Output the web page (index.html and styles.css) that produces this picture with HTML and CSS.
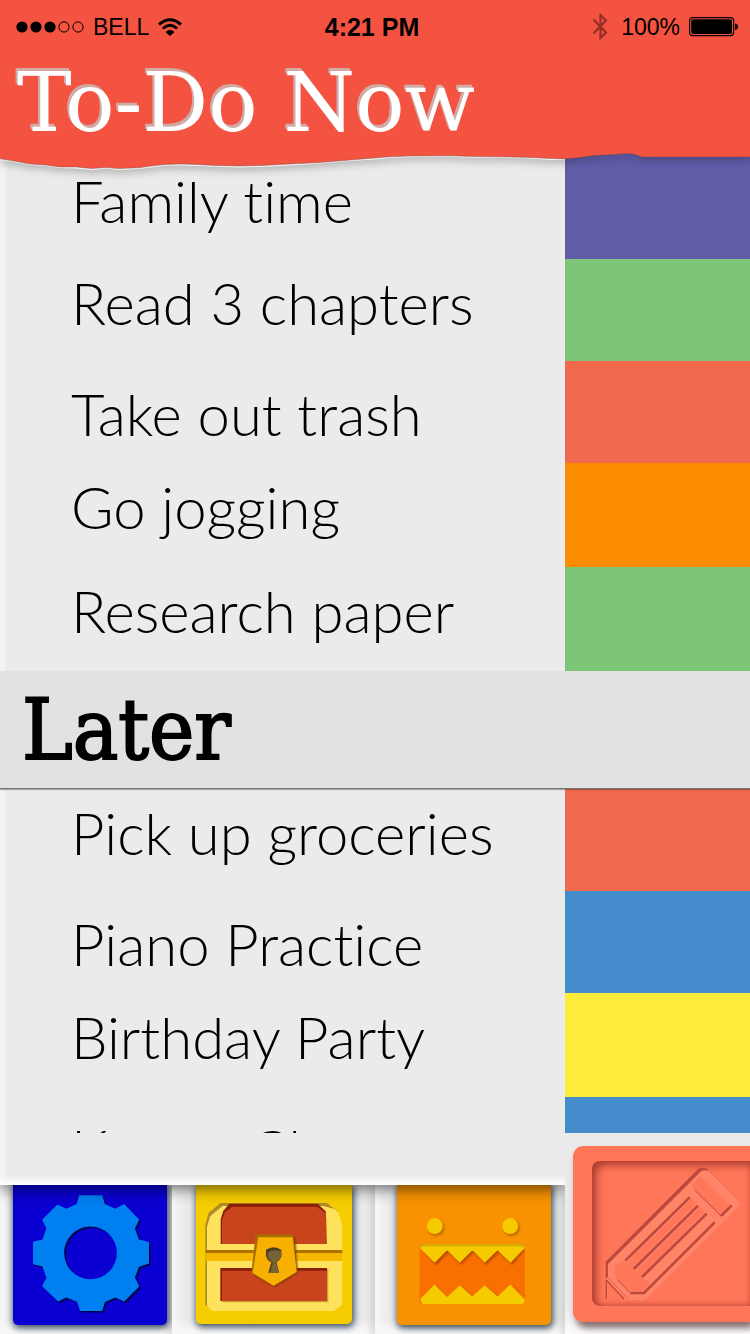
FILE: index.html
```html
<!DOCTYPE html>
<html lang="en">
<head>
<meta charset="utf-8">
<meta name="viewport" content="width=device-width, initial-scale=1">
<title>To-Do Now</title>
<link rel="stylesheet" href="styles.css">
</head>
<body>
<header class="header">
  <div class="status">
    <div class="status-side">
      <svg class="dots" width="68" height="14" viewBox="0 0 68 14" aria-hidden="true"><circle cx="6" cy="7" r="5.6"/><circle cx="20" cy="7" r="5.6"/><circle cx="34" cy="7" r="5.6"/><g fill="none" stroke="#000"><circle cx="48" cy="7" r="5.1"/><circle cx="62" cy="7" r="5.1"/></g></svg>
      <span>BELL</span>
      <svg width="24" height="18" viewBox="0 0 24 18" aria-hidden="true"><g fill="none" stroke="#000" stroke-width="3"><path d="M1 6.500Q12-3 23 6.500"/><path d="M4.800 10.500Q12 4 19.200 10.500"/></g><path d="M7.500 14Q12 9.800 16.500 14L12 18Z"/></svg>
    </div>
    <strong class="time">4:21 PM</strong>
    <div class="status-side status-right">
      <svg width="16" height="28" viewBox="0 0 16 28" aria-hidden="true"><path d="M1.500 6.500L14 19.500L8.500 25V2L14 7.500L1.500 20.500" fill="none" stroke="#962f26" stroke-width="2.200"/></svg>
      <span>100%</span>
      <svg width="50" height="20" viewBox="0 0 50 20" aria-hidden="true"><rect x=".6" y=".6" width="44" height="18" rx="3" fill="none" stroke="#000" stroke-width="1.200"/><rect x="2.200" y="2.200" width="40.800" height="14.800" rx="2"/><path d="M46 6.500Q49 7 49 9.700T46 13Z"/></svg>
    </div>
  </div>
  <h1 class="title">To-Do Now</h1>
  <svg class="tear" viewBox="0 0 750 22" preserveAspectRatio="none" aria-hidden="true">
    <path fill="#f4f4f4" d="M0 0V10L14 12L30 15L45 16L60 18L76 18.500L91 20L107 18.800L118 20L139 19L151 17.500L165 15.800L180 15.500L196 16L215 16.800L239 17.500L262 17L290 15.500L320 13.500L350 11L375 9.500L390 8L409 7L450 6.800L475 7.800L500 7.800L530 8.500L550 10L565 10V0Z"/>
    <path fill="#f45341" stroke="#5c4740" stroke-opacity=".55" stroke-width=".7" d="M-2-2V8.500L14 11L30 14L45 15L60 17L76 17L91 18.500L107 17.600L118 18.600L139 17.800L151 16L165 14.500L180 14L196 14.500L215 15.500L239 16L262 15.500L290 14L320 12.500L350 10L375 8L390 6.800L409 6L450 5.800L475 6.600L500 6.800L530 7.400L550 8.500L565 9L580 7.500L595 5.500L615 4.500L628 3.500L635 4.500L642 7H752V-2Z"/>
  </svg>
</header>
<main>
  <ul class="list">
    <li class="item first"><span class="label">Family time</span><span class="swatch purple"></span></li>
    <li class="item"><span class="label">Read 3 chapters</span><span class="swatch green"></span></li>
    <li class="item low"><span class="label">Take out trash</span><span class="swatch coral"></span></li>
    <li class="item tall"><span class="label">Go jogging</span><span class="swatch orange"></span></li>
    <li class="item tall"><span class="label">Research paper</span><span class="swatch green"></span></li>
  </ul>
  <h2 class="later">Later</h2>
  <ul class="list">
    <li class="item"><span class="label">Pick up groceries</span><span class="swatch coral"></span></li>
    <li class="item low"><span class="label">Piano Practice</span><span class="swatch blue"></span></li>
    <li class="item tall"><span class="label">Birthday Party</span><span class="swatch yellow"></span></li>
    <li class="item low cut"><span class="label">Karate Class</span><span class="swatch blue"></span></li>
  </ul>
</main>
<footer class="footer">
  <div class="dock">
    <div class="paper"></div>
    <nav class="tabs" aria-label="Sections">
      <div class="tab tab-gear"><button class="card card-blue" type="button" aria-label="Settings">
        <svg viewBox="39 257 461 419" aria-hidden="true"><defs><path id="gear" fill-rule="evenodd" d="M237 288H306L314 314L345 328L372 314L417 361L404 387L416 420L446 428V492L416 502L404 534L417 561L372 606L345 594L314 607L306 634H240L231 607L199 594L174 606L126 560L139 535L127 501L99 494V427L127 420L139 387L126 361L172 315L199 328L230 314ZM271 381A79 79 0 1 0 271 539A79 79 0 1 0 271 381Z"/></defs><use href="#gear" fill="#03064f" x="5" y="5"/><use href="#gear" fill="#0080f0"/></svg>
      </button></div>
      <div class="tab tab-chest"><button class="card card-yellow" type="button" aria-label="Rewards">
        <svg viewBox="48 45 468 417" aria-hidden="true">
          <path fill="#b18b29" d="M76 405V165L86 128L122 99H440L472 123L460 125L430 112L130 112L92 140L84 180V410Z"/>
          <path fill="#ffe25b" d="M81 400V170L91 138L128 108H430L462 116L474 126L487 166V403L462 423H98L81 408Z"/>
          <path fill="#8b1f0d" d="M122 222V148L130 122L148 101H413L437 124L440 222Z"/>
          <path fill="#c8441c" d="M126 222V150L135 127L157 110H411L433 127L439 148V222Z"/>
          <path fill="#ad7300" d="M77 240H487V249H77Z"/><path fill="#f5b800" d="M77 249H487V273H77Z"/>
          <path fill="#c8a52e" d="M126 298H445V397H126Z"/><path fill="#8b1f0d" d="M121 294H441V393H121Z"/><path fill="#c8441c" d="M126 302H441V393H126Z"/>
          <path class="soft" fill="#7a3b08" d="M232 200L345 202L353 308L285 351L222 314Z"/>
          <path fill="#a96c00" d="M227 193H338L340 202L350 306L281 347L214 309Z"/>
          <path fill="#f8b000" d="M235 202H338L350 306L281 347L218 309Z"/>
          <path fill="#4d4022" d="M258 239Q280 224 304 239V260Q299 271 290 277L297 308H265L274 277Q260 270 258 257Z"/>
          <path fill="#756334" d="M263 248Q281 236 304 244V260Q299 271 288 277L297 308H270L279 277Q263 269 263 254Z"/>
        </svg>
      </button></div>
      <div class="tab tab-monster"><button class="card card-orange" type="button" aria-label="Monster">
        <svg viewBox="82 45 461 420" aria-hidden="true">
          <g class="soft" fill="#b76600"><circle cx="199" cy="173" r="24"/><circle cx="425" cy="173" r="24"/></g>
          <g fill="#f5cb00"><circle cx="195" cy="168" r="24"/><circle cx="421" cy="168" r="24"/></g>
          <rect x="149" y="221" width="316" height="181" rx="12" fill="#f87000"/>
          <path class="soft" fill="#b84900" d="M157 236L199 285L237 246L273 284L312 246L350 284L388 246L427 284L461 244V230H157ZM156 392L197 349L235 385L273 349L311 385L350 349L388 385L427 349L461 387V392Z"/>
          <path fill="#d6ad00" d="M150 232Q152 221 164 221H454Q465 222 465 234L455 242H159Z"/>
          <path fill="#f5cb00" d="M150 233L160 229H455L465 233L422 278L383 240L345 278L308 240L270 278L232 240L195 278ZM152 386L194 343L232 380L270 345L307 379L345 345L383 379L421 343L465 388Q464 402 453 402H163Q153 399 152 386Z"/>
        </svg>
      </button></div>
    </nav>
  </div>
  <div class="compose">
    <button class="compose-btn" type="button" aria-label="New task"><span class="recess">
      <svg viewBox="112 123 474 434" aria-hidden="true">
        <path fill="#ff8468" d="M160 429L435 153Q448 143 462 153L550 237Q560 250 549 263L284 529Q274 540 260 540H154V474L160 468Z"/>
        <path fill="#bd493d" d="M153 425L430 147Q446 136 462 150L456 152Q445 148 437 156L160 432V470L153 476Z"/>
        <path fill="none" stroke="#d75f4d" stroke-width="2" d="M462 150L554 243"/>
        <path fill="#ff7658" d="M437 169L526 257L500 285L416 207L413 194ZM180 435L209 422L284 491L264 513H227L187 478L180 462Z"/>
        <path fill="#ff7658" d="M218 426L410 236L425 250L233 442ZM244 451L435 261L451 276L260 467Z"/>
        <g fill="none" stroke="#bd493d" stroke-width="8"><path d="M212 422L405 232M237 447L430 257M262 471L456 281M480 307L268 519H227M499 288L531 256"/></g>
        <path fill="none" stroke="#bd493d" stroke-width="3" d="M420 210L499 288M187 478L227 519"/>
        <path fill="#ff7658" d="M159 486L210 540H157Z"/>
        <path fill="none" stroke="#bd493d" stroke-width="4" d="M155 480V538M155 480L208 537"/>
        <path fill="none" stroke="#c95040" stroke-width="2" d="M160 472L221 538"/>
      </svg>
    </span></button>
  </div>
</footer>
</body>
</html>
```
FILE: styles.css
```css
* { box-sizing: border-box; }

body {
  margin: 0;
  min-height: 100vh;
  display: flex;
  flex-direction: column;
  overflow-x: hidden;
  background: #ebebeb;
  color: #000;
  font-family: "Liberation Sans", Arial, sans-serif;
}

h1, h2, ul { margin: 0; padding: 0; }
ul { list-style: none; }
svg { display: block; }
button { border: 0; padding: 0; cursor: pointer; }

.header {
  position: relative;
  z-index: 2;
  height: 150px;
  background: #f45341;
}

.status {
  display: grid;
  grid-template-columns: 308fr auto 319fr;
  align-items: center;
  height: 54px;
  padding: 0 11px 0 16px;
  font-size: 23px;
}

.status-side {
  display: flex;
  align-items: center;
  gap: 9px;
}

.status-right { justify-content: flex-end; }
.status-right svg:first-child { margin-right: 4px; }
.time { font-size: 25px; }

.title, .later {
  font-weight: 400;
  white-space: nowrap;
}

.title {
  padding-left: 17px;
  font-family: "DejaVu Serif", serif;
  font-size: 82px;
  line-height: 98px;
  color: #fff;
  text-shadow: -1px -1px #d1aaa6, -2px -2px #d1aaa6, -2px -3px #d1aaa6;
}

.tear {
  position: absolute;
  left: 0;
  top: 100%;
  width: 100%;
  height: 22px;
  filter: drop-shadow(0 3px 4px rgba(0, 0, 0, .25));
  clip-path: inset(0 0 -14px 0);
}

.item {
  display: grid;
  grid-template-columns: 565fr 185fr;
  height: 102px;
}

.label {
  padding: 12px 0 0 71px;
  background: linear-gradient(90deg, #f4f4f4 3px, #ebebeb 8px);
  font-family: Lato, sans-serif;
  font-size: 58px;
  font-weight: 300;
  font-variant-ligatures: none;
  line-height: 64px;
  white-space: nowrap;
}

.first { height: 109px; }
.first .label { padding-top: 19px; }
.tall { height: 104px; }
.low .label { padding-top: 21px; }
.cut { height: 36px; overflow: hidden; }

.purple { background: #605ca8; }
.green { background: #7dc577; }
.coral { background: #f26a4e; }
.orange { background: #fb8c00; }
.blue { background: #448ccb; }
.yellow { background: #ffeb3b; }

.later {
  position: relative;
  height: 118px;
  padding-left: 22px;
  border-bottom: 1px solid #777;
  background: #e2e2e2;
  box-shadow: 0 1px 1px rgba(0, 0, 0, .3);
  font-family: "DejaVu Serif Condensed", "DejaVu Serif", serif;
  font-stretch: condensed;
  font-size: 85px;
  line-height: 118px;
  -webkit-text-stroke: 2px #000;
}

.footer {
  flex: 1;
  display: grid;
  grid-template-columns: 565fr 185fr;
}

.dock {
  display: flex;
  flex-direction: column;
}

.paper {
  position: relative;
  z-index: 1;
  height: 52px;
  background: linear-gradient(transparent 42px, #fff 52px), linear-gradient(90deg, #f4f4f4 3px, #ebebeb 8px);
  box-shadow: 0 4px 14px rgba(0, 0, 0, .55);
  clip-path: inset(0 0 -20px 0);
}

.tabs {
  flex: 1;
  display: grid;
  grid-template-columns: 172fr 203fr 190fr;
}

.tab {
  background: linear-gradient(#ebebeb 88%, #fff);
  box-shadow: inset 6px 0 8px #f8f8f8, inset -4px 0 6px rgba(0, 0, 0, .12);
}

.tab-gear { padding: 0 5px 8px 13px; }
.tab-chest { padding: 0 23px 10px 24px; }
.tab-monster { padding: 0 14px 8px 22px; }

.card {
  width: 100%;
  border-radius: 0 0 5px 5px;
  box-shadow: 1px 2px 7px 1px #34465a;
}

.card svg { width: 100%; }
.card-blue { background: #0a00d2; }
.card-yellow { background: #f6cd00; }
.card-orange { background: #f89200; }
.soft { filter: blur(3px); }

.compose {
  padding: 13px 0 12px 8px;
  background: linear-gradient(#ebebeb 85%, #fff);
}

.compose-btn {
  display: block;
  width: 100%;
  padding: 15px 0 16px 19px;
  border-radius: 10px 0 0 10px;
  background: #ff7658;
  box-shadow: 3px 6px 7px #826c6c;
}

.recess {
  display: block;
  border-radius: 8px 0 0 8px;
  box-shadow: inset 4px 4px 8px #a8392e, inset 0 -2px 4px #d95d47;
}

.recess svg { width: 100%; }
```
